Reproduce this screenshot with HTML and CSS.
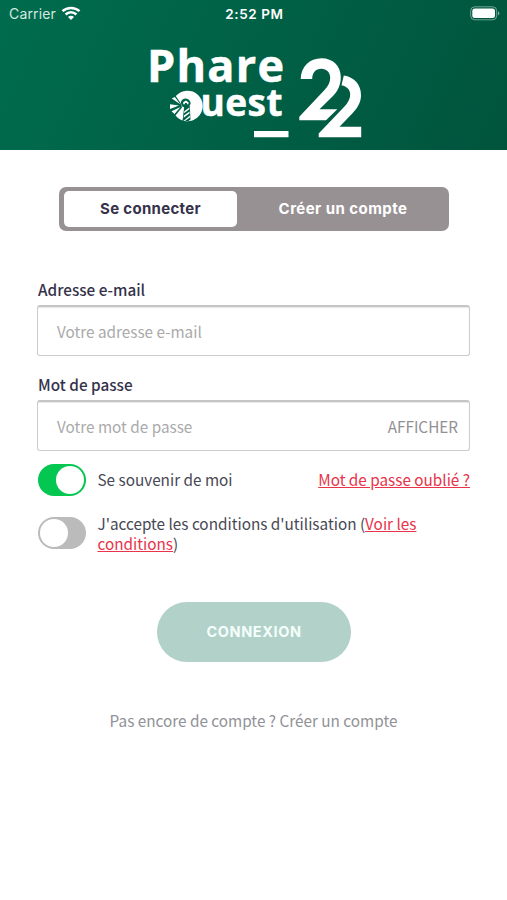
FILE: index.html
```html
<!DOCTYPE html>
<html lang="fr">
<head>
<meta charset="utf-8">
<meta name="viewport" content="width=device-width">
<title>Phare Ouest 22</title>
<link rel="stylesheet" href="styles.css">
</head>
<body>
<header class="header">
  <div class="status">
    <div class="carrier">Carrier
      <svg class="wifi" width="20" height="15" viewBox="0 0 20 15"><g fill="none" stroke="#fff" stroke-width="2.5"><path d="M1.500 5.200C6.200.8 13.800.8 18.500 5.200"/><path d="M4.600 8.500c3-2.900 7.800-2.900 10.800 0"/></g><path fill="#fff" d="M7 11c1.700-1.600 4.300-1.600 6 0l-3 3z"/></svg>
    </div>
    <div class="time">2:52 PM</div>
    <svg class="battery" width="31" height="15" viewBox="0 0 31 15"><rect x=".7" y=".8" width="26" height="13" rx="4" fill="none" stroke="#fff" stroke-opacity=".45"/><rect x="2.300" y="2.500" width="22.700" height="9.600" rx="2.500" fill="#fff"/><path d="M28 5.200q3 2.100 0 4.200z" fill="#fff" fill-opacity=".5"/></svg>
  </div>
  <svg class="logo" width="222" height="112" viewBox="142 28 222 112" fill="#fff">
    <text class="logo-text" x="147" y="82" font-size="45" textLength="137">Phare</text>
    <text class="logo-text" x="200.500" y="116.300" font-size="37" textLength="82">uest</text>
    <path d="M175.800 96A15.300 15.300 0 1 1 175.500 115.500L182 107.500 180.500 103Z"/>
    <path d="M170 104.200l9 1.300-9 3.500zM171.800 98.500l3-1.600 5.500 7.400zM174.500 114l6-7-9 4.300z"/>
    <path class="cut" d="M180.800 102.500q1-4 5-4 4.600.5 4.900 5.500l-1 1 .8 14.500-2 1.500h-6l1.600-13.500-2.400-1.500z"/>
    <path d="M183.200 102.200l2.600-1.800 2.700 1.800v2h-1.600v-1.200h-2v1.200h-1.700zM189.300 107.500v1.800l-5.300 4 .3-2zM189.600 111.500v1.800l-6 4.500.3-2.200zM189.900 115.600v1.900l-5 3.500h-1.500z"/>
    <path d="M254 131h34.500v6.300H254z"/>
    <path d="M300.700 79C301 66.500 309.500 58.300 321.500 58.300 333 58.300 340.800 66 340.800 77.300 340.800 84.500 338 91 333 96L319.500 109.300H337.300L326 120.200H299.300V116.700L324.500 90C328.300 86 330.200 82 330.200 78 330.200 72.300 326.500 68.700 321.300 68.700 315.800 68.700 312.200 72.800 312.200 79Z"/>
    <path d="M343.800 75.600C354 77 361 84.500 361 95 361 102 358 107.500 352.500 113.200L339.500 126.700H361.200V137.300H318.700V133.500L344 107C348 102.800 350.200 99 350.200 94.500 350.200 89.800 347 86.500 341.500 85.300Z"/>
  </svg>
</header>
<main class="content">
  <nav class="tabs">
    <button class="tab active">Se connecter</button>
    <button class="tab">Créer un compte</button>
  </nav>
  <form class="form">
    <label class="label">Adresse e-mail</label>
    <div class="field"><span class="hint">Votre adresse e-mail</span></div>
    <label class="label second">Mot de passe</label>
    <div class="field"><span class="hint">Votre mot de passe</span><span class="show">AFFICHER</span></div>
    <div class="row remember">
      <span class="switch on"></span><span class="remember-text">Se souvenir de moi</span>
      <a class="link forgot">Mot de passe oublié ?</a>
    </div>
    <div class="row terms">
      <span class="switch"></span>
      <p class="terms-text">J'accepte les conditions d'utilisation (<a class="link">Voir les<br>conditions</a>)</p>
    </div>
    <button type="button" class="submit">CONNEXION</button>
  </form>
  <p class="signup">Pas encore de compte ? Créer un compte</p>
</main>
</body>
</html>
```
FILE: styles.css
```css
* { box-sizing: border-box; }
body { margin: 0; background: #fff; color: #484854; font: 15.3px/20px "Noto Sans CJK SC", sans-serif; }
button { border: 0; padding: 0; background: none; }
p { margin: 0; }
.header { height: 150px; background: linear-gradient(115deg, #006c4d, #006046 50%, #00543c); }
.status { height: 28px; padding: 0 7px 0 9px; display: grid; grid-template-columns: 1fr auto 1fr; align-items: center; color: #fff; font: 14px/28px Inter, sans-serif; }
.carrier { display: flex; align-items: center; gap: 6px; color: #d5e9e1; letter-spacing: .15px; }
.wifi { margin: -2px 0 0 -1px; }
.time { font-weight: 600; font-size: 13.5px; letter-spacing: .6px; }
.battery { justify-self: end; margin: -2px -1px 0 0; }
.logo { display: block; margin: 0 0 0 142px; }
.logo-text { font-family: "Open Sans", sans-serif; font-weight: 700; stroke: #fff; stroke-width: .5px; }
.cut { fill: #006348; }
.content { padding: 37px 37px 0; }
.tabs { display: flex; width: 390px; height: 44px; margin: 0 auto 0 22px; padding: 4px 5px; border-radius: 7px; background: #989194; }
.tab { flex: 1; color: #fff; font: 700 15px/36px Inter, sans-serif; letter-spacing: .45px; border-radius: 5px; padding-left: 5px; }
.tab.active { flex: 0 0 173px; padding: 0; background: #fff; color: #35324a; letter-spacing: .3px; }
.form { margin-top: 48px; }
.label { display: block; padding-left: 1px; font-weight: 500; color: #34324a; height: 26px; line-height: 20px; }
.field { height: 51px; padding: 0 11px 0 19px; display: flex; align-items: center; justify-content: space-between; border: 1px solid #ccc; border-top: 2px solid #c5c5c5; border-radius: 3px; color: #aaa; line-height: 18px; padding-bottom: 1px; box-shadow: inset 0 1px 1px #e8e8e8; }
.show { color: #939094; }
.second { margin-top: 18px; }
.row { display: flex; align-items: center; padding-left: .5px; }
.remember { height: 32px; margin-top: 12.5px; }
.remember-text, .forgot { margin-top: -1px; }
.switch { flex: none; width: 48px; height: 32px; margin-right: 12px; padding: 2px; border-radius: 16px; background: #bbb; }
.switch::before { content: ""; display: block; width: 28px; height: 28px; border-radius: 50%; background: #fff; }
.switch.on { background: #04c752; }
.switch.on::before { margin-left: 16px; }
.link { color: #e8334a; text-decoration: underline; }
.forgot { margin-left: auto; }
.terms { height: 40px; margin-top: 17.5px; }
.terms-text { margin-top: -1px; }
.submit { display: block; width: 194px; height: 60px; margin: 49px 0 0 120px; border-radius: 30px; background: #b2d1c8; color: #f4fffc; font: 700 14.5px/58px Inter, sans-serif; letter-spacing: .6px; }
.signup { margin-top: 48px; text-align: center; color: #919297; }
```
